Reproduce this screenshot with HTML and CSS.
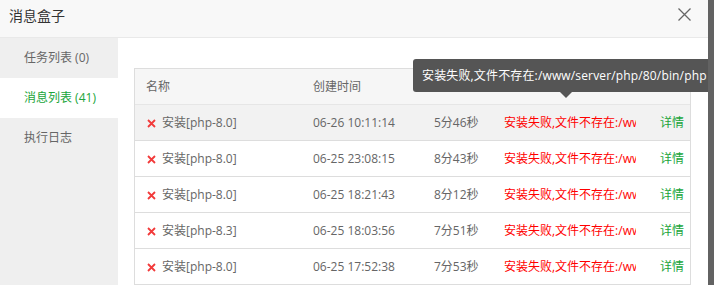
FILE: index.html
```html
<!DOCTYPE html>
<html lang="zh-CN">
<head>
    <meta charset="UTF-8">
    <title>消息盒子</title>
    <link rel="stylesheet" href="styles.css">
</head>
<body>
    <div class="wrap">
        <div class="dialog">
            <div class="dlg-head">
                <span class="dlg-title">消息盒子</span>
                <svg class="dlg-close" width="13" height="13" viewBox="0 0 13 13">
                    <path d="M0.5 0.5 L12.5 12.5 M12.5 0.5 L0.5 12.5" stroke="#666" stroke-width="1.3" fill="none"/>
                </svg>
            </div>
            <div class="dlg-body">
                <ul class="side">
                    <li>任务列表 (0)</li>
                    <li class="on">消息列表 (41)</li>
                    <li>执行日志</li>
                </ul>
                <div class="main">
                    <div class="table">
                        <div class="row head">
                            <div>名称</div>
                            <div>创建时间</div>
                            <div>耗时</div>
                            <div>执行结果</div>
                            <div class="act">操作</div>
                        </div>
                        <div class="row hover">
                            <div class="name"><svg class="fail" width="9" height="9" viewBox="0 0 9 9"><path d="M1 1 L8 8 M8 1 L1 8" stroke="#f23a3a" stroke-width="1.8"/></svg>安装[php-8.0]</div>
                            <div>06-26 10:11:14</div>
                            <div>5分46秒</div>
                            <div class="err">安装失败,文件不存在:/www/server/php/80/bin/php</div>
                            <div class="act"><a>详情</a></div>
                        </div>
                        <div class="row">
                            <div class="name"><svg class="fail" width="9" height="9" viewBox="0 0 9 9"><path d="M1 1 L8 8 M8 1 L1 8" stroke="#f23a3a" stroke-width="1.8"/></svg>安装[php-8.0]</div>
                            <div>06-25 23:08:15</div>
                            <div>8分43秒</div>
                            <div class="err">安装失败,文件不存在:/www/server/php/80/bin/php</div>
                            <div class="act"><a>详情</a></div>
                        </div>
                        <div class="row">
                            <div class="name"><svg class="fail" width="9" height="9" viewBox="0 0 9 9"><path d="M1 1 L8 8 M8 1 L1 8" stroke="#f23a3a" stroke-width="1.8"/></svg>安装[php-8.0]</div>
                            <div>06-25 18:21:43</div>
                            <div>8分12秒</div>
                            <div class="err">安装失败,文件不存在:/www/server/php/80/bin/php</div>
                            <div class="act"><a>详情</a></div>
                        </div>
                        <div class="row">
                            <div class="name"><svg class="fail" width="9" height="9" viewBox="0 0 9 9"><path d="M1 1 L8 8 M8 1 L1 8" stroke="#f23a3a" stroke-width="1.8"/></svg>安装[php-8.3]</div>
                            <div>06-25 18:03:56</div>
                            <div>7分51秒</div>
                            <div class="err">安装失败,文件不存在:/www/server/php/83/bin/php</div>
                            <div class="act"><a>详情</a></div>
                        </div>
                        <div class="row">
                            <div class="name"><svg class="fail" width="9" height="9" viewBox="0 0 9 9"><path d="M1 1 L8 8 M8 1 L1 8" stroke="#f23a3a" stroke-width="1.8"/></svg>安装[php-8.0]</div>
                            <div>06-25 17:52:38</div>
                            <div>7分53秒</div>
                            <div class="err">安装失败,文件不存在:/www/server/php/80/bin/php</div>
                            <div class="act"><a>详情</a></div>
                        </div>
                    </div>
                </div>
            </div>
            <div class="tip">安装失败,文件不存在:/www/server/php/80/bin/php</div>
        </div>
        <div class="shade"></div>
    </div>
</body>
</html>
```

FILE: styles.css
```css
body {
    margin: 0;
    font-family: "Open Sans", "Noto Sans CJK SC", sans-serif;
    color: #666;
}
.wrap {
    display: flex;
    height: 285px;
    overflow: hidden;
}
.dialog {
    width: 708px;
    position: relative;
    overflow: hidden;
    background: #fff;
    display: flex;
    flex-direction: column;
}
.shade {
    flex: 1;
    background: #626262;
}
.dlg-head {
    height: 38px;
    border-bottom: 1px solid #e9e9e9;
    background: #f8f8f8;
    display: flex;
    align-items: flex-start;
    padding: 6px 17px 0 9px;
    box-sizing: border-box;
}
.dlg-title {
    font-size: 14px;
    line-height: 20px;
    color: #333;
}
.dlg-close {
    margin-left: auto;
    margin-top: 2px;
}
.dlg-body {
    flex: 1;
    display: flex;
}
.side {
    list-style: none;
    margin: 0;
    padding: 0;
    width: 118px;
    background: #efefef;
}
.side li {
    height: 40px;
    line-height: 40px;
    padding-left: 24px;
    font-size: 12px;
    color: #666;
}
.side li.on {
    background: #fff;
    color: #20a53a;
}
.main {
    flex: 1;
    padding: 30px 17px 0 16px;
}
.table {
    border: 1px solid #ddd;
    border-bottom: 0;
    font-size: 12px;
}
.row {
    display: grid;
    grid-template-columns: 167px 121px 70px 143px 1fr;
    height: 35px;
    line-height: 35px;
    border-bottom: 1px solid #ddd;
}
.row > div {
    padding-left: 11px;
    white-space: nowrap;
    overflow: hidden;
}
.row.head {
    background: #f6f6f6;
    border-bottom-color: #e6e6e6;
}
.row.hover {
    background: #f2f2f2;
}
.name .fail {
    margin: 0 6px 0 1px;
    vertical-align: -1px;
}
.row .err {
    color: #f00;
}
.row .act {
    text-align: right;
    padding-right: 6px;
}
.act a {
    color: #20a53a;
}
.tip {
    position: absolute;
    left: 413px;
    top: 59px;
    height: 33px;
    line-height: 33px;
    padding: 0 9px;
    background: #555;
    color: #fff;
    font-size: 12px;
    letter-spacing: 0.15px;
    border-radius: 3px;
    white-space: nowrap;
}
.tip::after {
    content: "";
    position: absolute;
    left: 147px;
    bottom: -6px;
    border-left: 6px solid transparent;
    border-right: 6px solid transparent;
    border-top: 6px solid #555;
}
```
